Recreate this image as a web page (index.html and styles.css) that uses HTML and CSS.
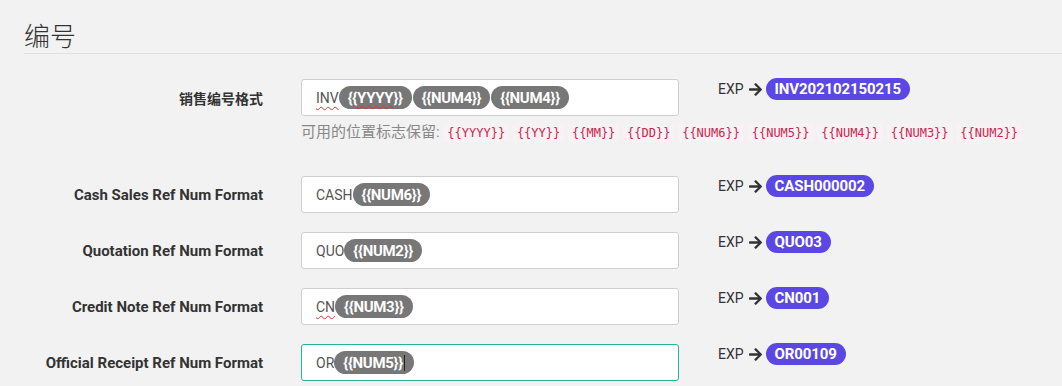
FILE: index.html
```html
<!DOCTYPE html>
<html lang="zh">
<head>
<meta charset="utf-8">
<title>编号</title>
<link rel="stylesheet" href="styles.css">
</head>
<body>
<div class="section">
  <h2 class="title">编号</h2>
  <div class="form">
    <div class="row row-first">
      <label class="label">销售编号格式</label>
      <div class="field">
        <div class="input"><span class="typo">INV</span><span class="tag">{{<span class="typo">YYYY</span>}}</span><span class="tag">{{NUM4}}</span><span class="tag">{{NUM4}}</span></div>
        <div class="help">可用的位置标志保留: <code>{{YYYY}}</code> <code>{{YY}}</code> <code>{{MM}}</code> <code>{{DD}}</code> <code>{{NUM6}}</code> <code>{{NUM5}}</code> <code>{{NUM4}}</code> <code>{{NUM3}}</code> <code>{{NUM2}}</code></div>
      </div>
      <div class="exp">EXP<svg class="arrow" viewBox="0 0 448 512"><path d="M190.5 66.9l22.2-22.2c9.4-9.4 24.6-9.4 33.9 0L441 239c9.4 9.4 9.4 24.6 0 33.9L246.6 467.3c-9.4 9.4-24.6 9.4-33.9 0l-22.2-22.2c-9.5-9.5-9.3-25 .4-34.3L311.4 296H24c-13.3 0-24-10.7-24-24v-32c0-13.3 10.7-24 24-24h287.4L190.9 101.2c-9.8-9.3-10-24.8-.4-34.3z"/></svg><span class="badge">INV202102150215</span></div>
    </div>
    <div class="row">
      <label class="label">Cash Sales Ref Num Format</label>
      <div class="field">
        <div class="input">CASH<span class="tag">{{NUM6}}</span></div>
      </div>
      <div class="exp">EXP<svg class="arrow" viewBox="0 0 448 512"><path d="M190.5 66.9l22.2-22.2c9.4-9.4 24.6-9.4 33.9 0L441 239c9.4 9.4 9.4 24.6 0 33.9L246.6 467.3c-9.4 9.4-24.6 9.4-33.9 0l-22.2-22.2c-9.5-9.5-9.3-25 .4-34.3L311.4 296H24c-13.3 0-24-10.7-24-24v-32c0-13.3 10.7-24 24-24h287.4L190.9 101.2c-9.8-9.3-10-24.8-.4-34.3z"/></svg><span class="badge">CASH000002</span></div>
    </div>
    <div class="row">
      <label class="label">Quotation Ref Num Format</label>
      <div class="field">
        <div class="input">QUO<span class="tag">{{NUM2}}</span></div>
      </div>
      <div class="exp">EXP<svg class="arrow" viewBox="0 0 448 512"><path d="M190.5 66.9l22.2-22.2c9.4-9.4 24.6-9.4 33.9 0L441 239c9.4 9.4 9.4 24.6 0 33.9L246.6 467.3c-9.4 9.4-24.6 9.4-33.9 0l-22.2-22.2c-9.5-9.5-9.3-25 .4-34.3L311.4 296H24c-13.3 0-24-10.7-24-24v-32c0-13.3 10.7-24 24-24h287.4L190.9 101.2c-9.8-9.3-10-24.8-.4-34.3z"/></svg><span class="badge">QUO03</span></div>
    </div>
    <div class="row">
      <label class="label">Credit Note Ref Num Format</label>
      <div class="field">
        <div class="input"><span class="typo">CN</span><span class="tag">{{NUM3}}</span></div>
      </div>
      <div class="exp">EXP<svg class="arrow" viewBox="0 0 448 512"><path d="M190.5 66.9l22.2-22.2c9.4-9.4 24.6-9.4 33.9 0L441 239c9.4 9.4 9.4 24.6 0 33.9L246.6 467.3c-9.4 9.4-24.6 9.4-33.9 0l-22.2-22.2c-9.5-9.5-9.3-25 .4-34.3L311.4 296H24c-13.3 0-24-10.7-24-24v-32c0-13.3 10.7-24 24-24h287.4L190.9 101.2c-9.8-9.3-10-24.8-.4-34.3z"/></svg><span class="badge">CN001</span></div>
    </div>
    <div class="row">
      <label class="label">Official Receipt Ref Num Format</label>
      <div class="field">
        <div class="input input-focus">OR<span class="tag">{{NUM5}}<span class="caret"></span></span></div>
      </div>
      <div class="exp">EXP<svg class="arrow" viewBox="0 0 448 512"><path d="M190.5 66.9l22.2-22.2c9.4-9.4 24.6-9.4 33.9 0L441 239c9.4 9.4 9.4 24.6 0 33.9L246.6 467.3c-9.4 9.4-24.6 9.4-33.9 0l-22.2-22.2c-9.5-9.5-9.3-25 .4-34.3L311.4 296H24c-13.3 0-24-10.7-24-24v-32c0-13.3 10.7-24 24-24h287.4L190.9 101.2c-9.8-9.3-10-24.8-.4-34.3z"/></svg><span class="badge">OR00109</span></div>
    </div>
  </div>
</div>
</body>
</html>
```

FILE: styles.css
```css
html, body {
  margin: 0;
  padding: 0;
  background: #f2f2f2;
  font-family: Roboto, "Noto Sans CJK SC", sans-serif;
  color: #333;
}

.section {
  padding-left: 24px;
}

.title {
  margin: 0;
  padding-top: 17px;
  height: 36px;
  line-height: 36px;
  font-size: 26px;
  font-weight: 300;
  color: #333;
  font-family: "Noto Sans CJK SC", sans-serif;
  border-bottom: 1px solid #e0e0e0;
}

.form {
  padding-top: 25px;
}

.row {
  display: grid;
  grid-template-columns: 239px 378px 1fr;
  column-gap: 38px;
  margin-bottom: 19px;
}

.label {
  height: 37px;
  display: flex;
  align-items: center;
  justify-content: flex-end;
  font-size: 15px;
  font-weight: 700;
  color: #333;
  font-family: Roboto, "Noto Sans CJK SC", sans-serif;
}

.row-first .label {
  font-size: 14px;
}

.input {
  box-sizing: border-box;
  height: 37px;
  background: #fff;
  border: 1px solid #cfcfcf;
  border-radius: 3px;
  display: flex;
  align-items: center;
  padding-left: 14px;
  font-size: 14px;
  color: #555;
}

.input-focus {
  border-color: #22b596;
}

.typo {
  text-decoration: underline wavy #e0302c;
  text-decoration-thickness: 1px;
  text-underline-offset: 3px;
  text-decoration-skip-ink: none;
}

.tag {
  display: inline-flex;
  align-items: center;
  height: 23px;
  padding: 0 9px;
  margin-right: 1px;
  border-radius: 12px;
  background: #777;
  color: #fff;
  font-size: 15px;
  font-weight: 700;
  letter-spacing: -0.3px;
}

.tag .typo {
  text-underline-offset: 2px;
}

.caret {
  display: inline-block;
  width: 1px;
  height: 16px;
  background: #222;
  margin-left: 1px;
}

.help {
  margin-top: 6px;
  padding-bottom: 14px;
  line-height: 20px;
  font-size: 15px;
  color: #888;
  font-family: Roboto, "Noto Sans CJK SC", sans-serif;
  white-space: nowrap;
}

.help code {
  font-family: "DejaVu Sans Mono", monospace;
  font-size: 12px;
  color: #c7254e;
  background: #f9f2f4;
  padding: 2px 4px;
  border-radius: 4px;
}

.exp {
  display: flex;
  align-items: center;
  align-self: start;
  margin-left: 1px;
  margin-top: -1px;
  height: 22px;
  font-size: 14px;
  color: #333;
}

.arrow {
  width: 13px;
  height: 15px;
  fill: #333;
  margin: 0 4px 0 5px;
}

.badge {
  display: inline-flex;
  align-items: center;
  height: 22px;
  padding: 0 9px;
  border-radius: 11px;
  background: #5b48e4;
  color: #fff;
  font-size: 15px;
  font-weight: 700;
  letter-spacing: -0.1px;
}
```
